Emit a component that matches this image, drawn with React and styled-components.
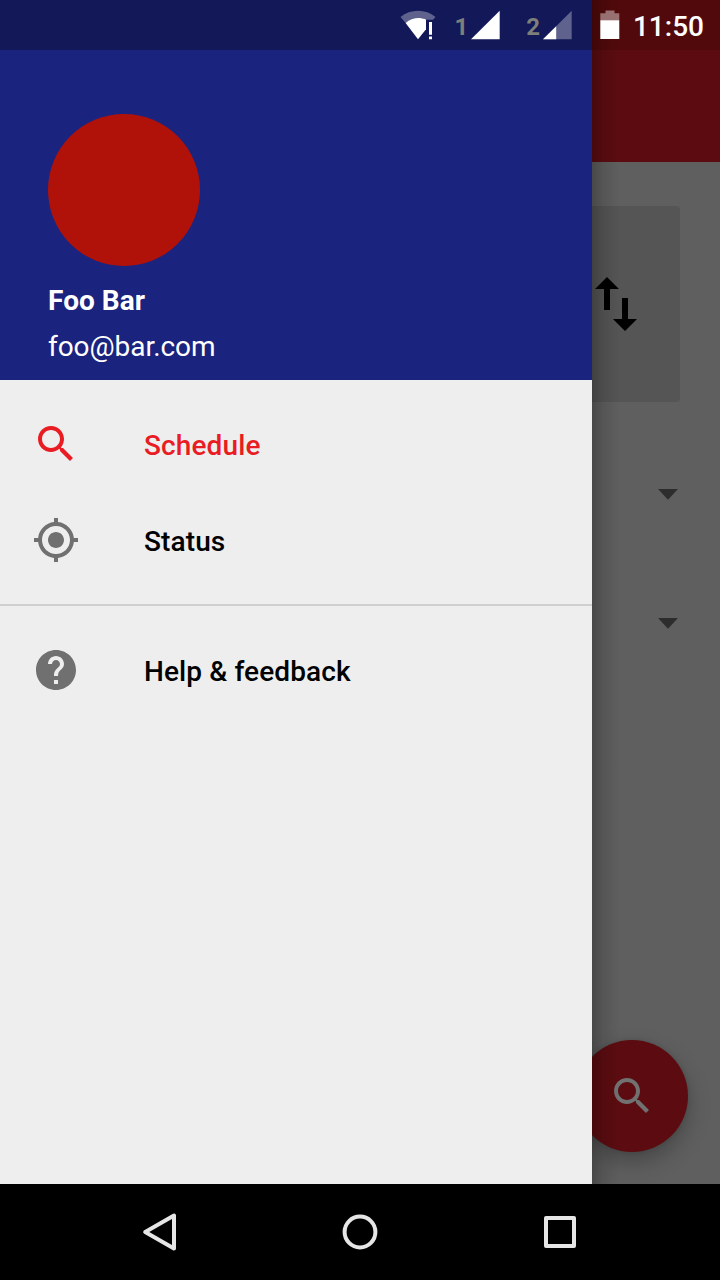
import React from "react";
import styled, { createGlobalStyle } from "styled-components";

const GlobalStyle = createGlobalStyle`
  body { margin: 0; background: #000; }
  * { box-sizing: border-box; }
  svg { display: block; flex: none; }
`;

const Screen = styled.div`
  position: relative;
  display: flex;
  flex-direction: column;
  width: 720px;
  height: 1280px;
  overflow: hidden;
  background: #000;
  font-family: Roboto, "Liberation Sans", sans-serif;
`;

const Stage = styled.main`
  position: relative;
  flex: 1;
  overflow: hidden;
  background: #5f5f5f;
`;

const Page = styled.div`
  display: flex;
  flex-direction: column;
  height: 100%;
`;

const PageStatusBand = styled.div`
  height: 50px;
  background: #52090b;
`;

const AppBar = styled.header`
  height: 112px;
  background: #5c0c10;
`;

const RouteCard = styled.section`
  display: flex;
  align-items: center;
  justify-content: flex-end;
  height: 196px;
  margin: 44px 40px 0;
  padding-right: 43px;
  border-radius: 4px;
  background: #555555;
`;

const SelectRow = styled.div`
  display: flex;
  align-items: center;
  justify-content: flex-end;
  height: 129px;
  padding-right: 42px;
`;

const Selects = styled.div`
  padding-top: 28px;
`;

const Fab = styled.button`
  position: absolute;
  right: 32px;
  bottom: 32px;
  display: flex;
  align-items: center;
  justify-content: center;
  width: 112px;
  height: 112px;
  padding: 0;
  border: 0;
  border-radius: 50%;
  background: #5c0c10;
  color: #717171;
  box-shadow: 0 10px 22px rgba(0, 0, 0, 0.26), 0 0 5px rgba(0, 0, 0, 0.12);
`;

const Drawer = styled.aside`
  position: absolute;
  inset: 0 auto 0 0;
  width: 592px;
  background: #eeeeee;

  &::after {
    content: "";
    position: absolute;
    top: 0;
    left: 100%;
    width: 28px;
    height: 100%;
    background: linear-gradient(90deg, rgba(0, 0, 0, 0.24), rgba(0, 0, 0, 0.1) 40%, transparent);
  }
`;

const DrawerStatusBand = styled.div`
  height: 50px;
  background: #121858;
`;

const Profile = styled.div`
  height: 330px;
  padding: 64px 48px 0;
  background: #1a237e;
  color: #fff;
  font-size: 28px;
  line-height: 46px;
`;

const Avatar = styled.div`
  width: 152px;
  height: 152px;
  margin-bottom: 12px;
  border-radius: 50%;
  background: #b0120a;
`;

const ProfileLine = styled.div`
  font-weight: ${(p) => (p.$strong ? 700 : 400)};
  letter-spacing: ${(p) => (p.$strong ? "0.05px" : "-0.06px")};
`;

const MenuGroup = styled.nav`
  padding: 16px 0;

  & + & { border-top: 2px solid #cfcfcf; }
`;

const MenuItem = styled.div`
  display: flex;
  align-items: center;
  gap: 64px;
  height: 96px;
  padding: 0 32px;
  color: ${(p) => (p.$active ? "#e91c23" : "#707070")};
`;

const MenuLabel = styled.span`
  padding-top: 4px;
  color: ${(p) => (p.$active ? "#e91c23" : "#000")};
  font-size: 28px;
  font-weight: 500;
  line-height: 34px;
  letter-spacing: 0.12px;
`;

const StatusBar = styled.div`
  position: absolute;
  top: 0;
  right: 0;
  display: flex;
  align-items: center;
  height: 50px;
  padding-right: 16px;
  color: #fff;
`;

const SimSlot = styled.div`
  display: flex;
  align-items: center;
  gap: 3px;
  margin-right: ${(p) => p.$after}px;
`;

const SimNumber = styled.span`
  padding-top: 4px;
  color: #7f7f7a;
  font-size: 24px;
  font-weight: 700;
  line-height: 28px;
`;

const Clock = styled.time`
  margin-left: 13px;
  padding-top: 3px;
  font-size: 28px;
  font-weight: 500;
  line-height: 32px;
`;

const NavBar = styled.footer`
  display: flex;
  align-items: center;
  justify-content: center;
  gap: 152px;
  height: 96px;
  background: #000;
`;

const PATHS = {
  search:
    "M15.5 14h-.79l-.28-.27C15.41 12.59 16 11.11 16 9.5 16 5.91 13.09 3 9.5 3S3 5.91 3 9.5 5.91 16 9.5 16c1.61 0 3.09-.59 4.23-1.57l.27.28v.79l5 4.99L20.49 19l-4.99-5zm-6 0C7.01 14 5 11.99 5 9.5S7.01 5 9.5 5 14 7.01 14 9.5 11.99 14 9.5 14z",
  location:
    "M12 8c-2.21 0-4 1.79-4 4s1.79 4 4 4 4-1.79 4-4-1.79-4-4-4zm8.94 3c-.46-4.17-3.77-7.48-7.94-7.94V1h-2v2.06C6.83 3.52 3.52 6.83 3.06 11H1v2h2.06c.46 4.17 3.77 7.48 7.94 7.94V23h2v-2.06c4.17-.46 7.48-3.77 7.94-7.94H23v-2h-2.06zM12 19c-3.87 0-7-3.13-7-7s3.13-7 7-7 7 3.13 7 7-3.13 7-7 7z",
  help:
    "M12 2C6.48 2 2 6.48 2 12s4.48 10 10 10 10-4.48 10-10S17.52 2 12 2zm1 17h-2v-2h2v2zm2.07-7.75l-.9.92C13.45 12.9 13 13.5 13 15h-2v-.5c0-1.1.45-2.1 1.17-2.83l1.24-1.26c.37-.36.59-.86.59-1.41 0-1.1-.9-2-2-2s-2 .9-2 2H8c0-2.21 1.79-4 4-4s4 1.79 4 4c0 .88-.36 1.68-.93 2.25z",
};

const Icon = ({ name }) => (
  <svg width="48" height="48" viewBox="0 0 24 24" fill="currentColor">
    <path d={PATHS[name]} />
  </svg>
);

const Caret = () => (
  <svg width="20" height="11" viewBox="0 0 20 11">
    <path d="M0 0h20L10 10.800z" fill="#2d2d2d" />
  </svg>
);

const SwapIcon = () => (
  <svg width="42" height="54" viewBox="0 0 42 54">
    <path d="M12 0L24 12H15V33H9V12H0zM30 54L18 42H27V21H33V42H42z" />
  </svg>
);

const WifiIcon = () => (
  <svg width="36" height="30" viewBox="0 0 36 30" fill="#fff">
    <path d="M.5 7C10-1.200 26-1.200 35.500 7L33 9.800H26V9.600C20 7 11 7.500 5.600 12.900z" opacity=".32" />
    <path d="M5.600 12.900C11 7.500 20 7 26 9.600V19.200L18 29.300z" />
    <path d="M29 12h3v12.700H29zM29 26.600h3V29.300H29z" />
  </svg>
);

const SignalIcon = ({ partial }) => (
  <svg width="29" height="30" viewBox="0 0 29 30" fill="#fff">
    <path d="M0 29.300L28.700.7V29.300z" opacity={partial ? 0.32 : 1} />
    {partial && <path d="M0 29.300L13.200 16.200V29.300z" />}
  </svg>
);

const BatteryIcon = () => (
  <svg width="20" height="30" viewBox="0 0 20 30" fill="#fff">
    <path d="M5.500.5h9v2.700H19.300V10.200H.3V3.200h5.200z" opacity=".42" />
    <path d="M.3 10.200h19V29H.3z" />
  </svg>
);

const BatterySlot = styled.div`
  display: flex;
`;

const WifiSlot = styled.div`
  margin-right: 18px;
`;

export default function App() {
  return (
    <>
      <GlobalStyle />
      <Screen>
        <Stage>
          <Page>
            <PageStatusBand />
            <AppBar />
            <RouteCard>
              <SwapIcon />
            </RouteCard>
            <Selects>
              <SelectRow><Caret /></SelectRow>
              <SelectRow><Caret /></SelectRow>
            </Selects>
          </Page>
          <Fab aria-label="Search"><Icon name="search" /></Fab>
          <Drawer>
            <DrawerStatusBand />
            <Profile>
              <Avatar />
              <ProfileLine $strong>Foo Bar</ProfileLine>
              <ProfileLine>foo@bar.com</ProfileLine>
            </Profile>
            <MenuGroup>
              <MenuItem $active>
                <Icon name="search" />
                <MenuLabel $active>Schedule</MenuLabel>
              </MenuItem>
              <MenuItem>
                <Icon name="location" />
                <MenuLabel>Status</MenuLabel>
              </MenuItem>
            </MenuGroup>
            <MenuGroup>
              <MenuItem>
                <Icon name="help" />
                <MenuLabel>Help &amp; feedback</MenuLabel>
              </MenuItem>
            </MenuGroup>
          </Drawer>
          <StatusBar>
            <WifiSlot><WifiIcon /></WifiSlot>
            <SimSlot $after={26}>
              <SimNumber>1</SimNumber>
              <SignalIcon />
            </SimSlot>
            <SimSlot $after={28}>
              <SimNumber>2</SimNumber>
              <SignalIcon partial />
            </SimSlot>
            <BatterySlot><BatteryIcon /></BatterySlot>
            <Clock>11:50</Clock>
          </StatusBar>
        </Stage>
        <NavBar>
          <svg width="48" height="48" viewBox="0 0 48 48" fill="none" stroke="#e6e6e6" strokeWidth="4" strokeLinejoin="round">
            <path d="M9.200 24L38 7.600V40.600z" />
          </svg>
          <svg width="48" height="48" viewBox="0 0 48 48" fill="none" stroke="#e6e6e6" strokeWidth="4">
            <circle cx="24" cy="24" r="15.400" />
          </svg>
          <svg width="48" height="48" viewBox="0 0 48 48" fill="none" stroke="#e6e6e6" strokeWidth="4" strokeLinejoin="round">
            <path d="M10 10h28v28H10z" />
          </svg>
        </NavBar>
      </Screen>
    </>
  );
}
